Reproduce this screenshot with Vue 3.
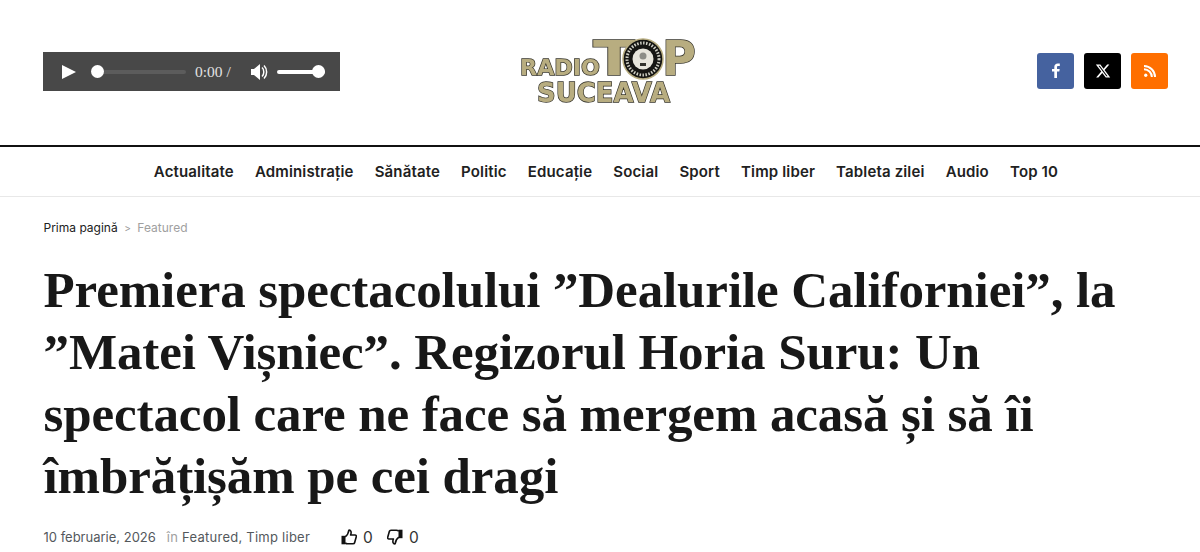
<script setup>
const nav = ['Actualitate','Administrație','Sănătate','Politic','Educație','Social','Sport','Timp liber','Tableta zilei','Audio','Top 10']
const lines = ['Premiera spectacolului ”Dealurile Californiei”, la','”Matei Vișniec”. Regizorul Horia Suru: Un','spectacol care ne face să mergem acasă și să îi','îmbrățișăm pe cei dragi']
const thumb = 'M4.200 7.800C6 6.500 7.500 4.500 7.800 1.200C9.800 .8 10.800 3 9.600 6H14C15.200 6 15.600 7 15.200 8L13.600 13.800C13.400 14.500 12.800 14.800 12 14.800H6.500C5.500 14.800 4.800 14.300 4.200 13.800'
</script>

<template>
  <div class="page">
    <header class="top">
      <div class="player">
        <svg class="play" width="14" height="14" viewBox="0 0 14 14"><path d="M0 0L14 7L0 14Z" fill="#fff"/></svg>
        <div class="track"><span class="knob"></span></div>
        <span class="time">0:00 /</span>
        <svg class="vol" width="17" height="16" viewBox="0 0 17 16"><path d="M0 5H3L9 0V16L3 11H0Z" fill="#fff"/><path d="M11 3.500C13.400 5.500 13.400 10.500 11 12.500M13 1.500C16.500 5 16.500 11 13 14.500" fill="none" stroke="#fff" stroke-width="1.500"/></svg>
        <div class="volbar"><span class="knob end"></span></div>
      </div>
      <svg class="logo" width="200" height="80" viewBox="0 0 200 80">
        <g font-family="'DejaVu Sans',sans-serif" font-weight="700" fill="#b8ad80" stroke="#35332a" stroke-width="1.400" paint-order="stroke">
          <text x="10" y="45" font-size="22" textLength="80" lengthAdjust="spacingAndGlyphs">RADIO</text>
          <text x="83" y="45" font-size="48" textLength="42" lengthAdjust="spacingAndGlyphs">T</text>
          <text x="152" y="45" font-size="48" textLength="34" lengthAdjust="spacingAndGlyphs">P</text>
          <text x="27" y="72" font-size="27" textLength="133" lengthAdjust="spacingAndGlyphs">SUCEAVA</text>
        </g>
        <circle cx="133" cy="29" r="20" fill="#161613" stroke="#b8ad80" stroke-width="1.500"/>
        <circle cx="133" cy="29" r="16" fill="none" stroke="#cfcfc4" stroke-width="3" stroke-dasharray="1.500 1.500"/>
        <circle cx="133" cy="29" r="10.500" fill="#e8e6dc"/>
        <circle cx="133" cy="26" r="3.500" fill="#8d8d86"/>
        <rect x="130" y="33" width="6" height="3" fill="#33332d"/>
      </svg>
      <div class="social">
        <a class="btn fb"><svg width="9" height="15" viewBox="0 0 9 15"><path d="M6 15V8.500H8.300L8.700 6H6V4.300C6 3.500 6.300 3 7.400 3H8.800V.6C8.400.5 7.600.4 6.800.4 4.700.4 3.300 1.700 3.300 4V6H1V8.500H3.300V15Z" fill="#fff"/></svg></a>
        <a class="btn x"><svg width="16" height="16" viewBox="0 0 24 24"><path d="M18.244 2.250h3.308l-7.227 8.260 8.502 11.240H16.170l-5.214-6.817L4.990 21.750H1.680l7.730-8.835L1.254 2.250H8.080l4.713 6.231zm-1.161 17.520h1.833L7.084 4.126H5.117z" fill="#fff"/></svg></a>
        <a class="btn rss"><svg width="12" height="12" viewBox="0 0 11 11"><circle cx="1.600" cy="9.400" r="1.500" fill="#fff"/><path d="M0 3.800A7.200 7.200 0 0 1 7.200 11M0 .9A10.100 10.100 0 0 1 10.100 11" fill="none" stroke="#fff" stroke-width="1.800"/></svg></a>
      </div>
    </header>
    <nav class="nav">
      <a v-for="n in nav" :key="n">{{ n }}</a>
    </nav>
    <main class="body">
      <div class="crumbs"><span>Prima pagină</span><i>&gt;</i><span class="muted">Featured</span></div>
      <h1><span v-for="l in lines" :key="l">{{ l }}</span></h1>
      <div class="meta">
        <span class="date">10 februarie, 2026</span>
        <span class="cats"><span class="in">în</span> Featured, Timp liber</span>
        <span class="votes">
          <svg width="16" height="16" viewBox="0 0 16 16"><rect x=".5" y="6.800" width="4" height="8.500" fill="#111"/><path :d="thumb" fill="none" stroke="#111" stroke-width="1.600" stroke-linejoin="round"/></svg>
          <b>0</b>
          <svg class="down" width="16" height="16" viewBox="0 0 16 16"><rect x=".5" y="6.800" width="4" height="8.500" fill="#111"/><path :d="thumb" fill="none" stroke="#111" stroke-width="1.600" stroke-linejoin="round"/></svg>
          <b>0</b>
        </span>
      </div>
    </main>
  </div>
</template>

<style scoped>
.page { width: 1200px; height: 552px; overflow: hidden; background: #fff; font-family: Inter, "Noto Sans", sans-serif; color: #212121; }
.top { height: 145px; display: grid; grid-template-columns: 1fr 200px 1fr; align-items: center; padding: 0 32px 0 43px; box-sizing: border-box; }
.player { width: 297px; height: 39px; margin-top: -2px; background: #484848; display: flex; align-items: center; box-sizing: border-box; padding-left: 19px; color: #ddd; }
.play { flex: none; }
.track { position: relative; width: 94px; height: 4px; margin-left: 16px; background: #5c5c5c; border-radius: 2px; }
.knob { position: absolute; left: -1px; top: -4.500px; width: 13px; height: 13px; border-radius: 50%; background: #fff; }
.time { margin-left: 9px; width: 47px; font: 15.500px "Liberation Serif", serif; color: #e2e2e2; white-space: nowrap; }
.vol { margin-left: 9px; flex: none; }
.volbar { position: relative; width: 48px; height: 4px; margin-left: 9px; background: #fff; border-radius: 2px; }
.knob.end { left: 35px; }
.logo { justify-self: center; margin-top: -5px; margin-left: 9px; filter: blur(0.4px); }
.social { justify-self: end; display: flex; gap: 10px; margin-top: -4px; }
.btn { width: 37px; height: 36px; border-radius: 3px; display: flex; align-items: center; justify-content: center; }
.fb { background: #45629f; }
.x { background: #000; }
.rss { background: #ff6f00; }
.nav { height: 49px; border-top: 2px solid #111; border-bottom: 1px solid #e8e8e8; display: flex; justify-content: center; align-items: center; gap: 21.100px; padding-left: 12px; font-size: 15px; letter-spacing: .15px; font-weight: 600; color: #212121; }
.nav a { white-space: nowrap; }
.body { padding: 0 43.500px; }
.crumbs { margin-top: 22px; height: 17px; display: flex; align-items: center; font-size: 12px; color: #212121; }
.crumbs i { font-style: normal; margin: 0 6.500px; color: #999; font-size: 10px; }
.muted { color: #a0a0a0; }
h1 { margin: 23px 0 0; font: 700 51px/62px "Liberation Serif", serif; letter-spacing: -0.1px; color: #181818; white-space: nowrap; }
h1 span { display: block; }
.meta { margin-top: 20px; display: flex; align-items: center; font-size: 13px; color: #53585c; height: 20px; }
.cats { margin-left: 11px; letter-spacing: .25px; }
.in { color: #a0a0a0; }
.votes { margin-left: 31px; display: flex; align-items: center; }
.votes b { font-weight: 400; font-size: 15.500px; color: #333; margin: 0 14px 0 6px; }
.down { transform: scale(-1, -1); }
</style>
